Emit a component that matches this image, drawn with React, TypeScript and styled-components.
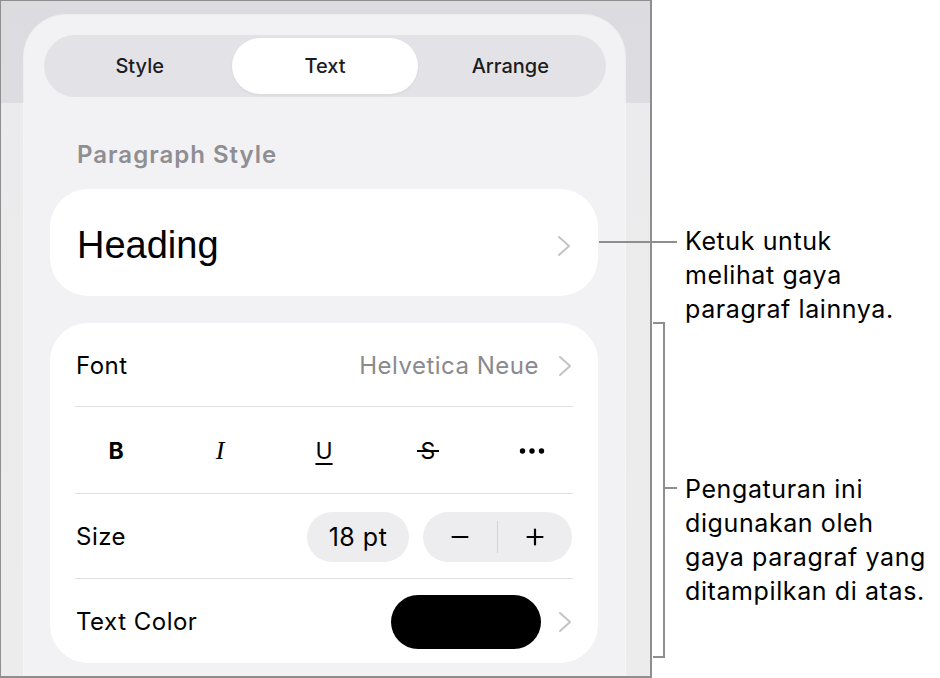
import React from "react";
import styled, { createGlobalStyle } from "styled-components";

const Global = createGlobalStyle`
  html, body { margin: 0; padding: 0; background: #ffffff; }
  body {
    width: 940px;
    height: 678px;
    overflow: hidden;
    font-family: Inter, "Noto Sans", "Liberation Sans", sans-serif;
    -webkit-font-smoothing: antialiased;
  }
  * { box-sizing: border-box; }
`;

const Page = styled.div`
  position: relative;
  display: flex;
  width: 940px;
  height: 678px;
`;

const Frame = styled.div`
  flex: 0 0 652px;
  height: 678px;
  border-style: solid;
  border-color: #8e8e8e;
  border-width: 1px 2px 2px 1px;
  background: linear-gradient(to bottom, #dcdce0 0, #dddde1 102px, #ebebed 102px, #ececec 100%);
  padding: 14px 25px 0 23px;
  overflow: hidden;
`;

const Sheet = styled.div`
  height: 100%;
  border-radius: 42px 42px 0 0;
  background: #f2f2f4;
  padding: 20px 19px 0 20px;
  box-shadow: 0 0 0 1px rgba(255, 255, 255, 0.5);
`;

const Segmented = styled.div`
  display: grid;
  grid-template-columns: repeat(3, 1fr);
  height: 62px;
  padding: 3px;
  border-radius: 31px;
  background: #e3e3e7;
`;

const Tab = styled.div<{ $active?: boolean }>`
  display: flex;
  align-items: center;
  justify-content: center;
  border-radius: 28px;
  font-size: 20px;
  font-weight: 500;
  color: #1c1c1e;
  background: ${(p) => (p.$active ? "#ffffff" : "transparent")};
  box-shadow: ${(p) => (p.$active ? "0 1px 3px rgba(0,0,0,0.06)" : "none")};
`;

const Body = styled.div`
  padding: 0 8px 0 6px;
`;

const SectionLabel = styled.div`
  margin: 46px 0 0 27px;
  font-size: 24px;
  line-height: 24px;
  font-weight: 600;
  letter-spacing: 1px;
  color: #8e8e93;
`;

const HeadingCard = styled.div`
  display: flex;
  align-items: center;
  justify-content: space-between;
  margin-top: 22px;
  height: 107px;
  padding: 6px 27px 0 27px;
  border-radius: 38px;
  background: #ffffff;
`;

const HeadingText = styled.span`
  font-family: "Liberation Sans", Arial, sans-serif;
  font-size: 38px;
  color: #000000;
`;

const Card = styled.div`
  margin-top: 27px;
  border-radius: 38px;
  background: #ffffff;
  overflow: hidden;
`;

const Row = styled.div<{ $h: number; $divided?: boolean }>`
  position: relative;
  display: flex;
  align-items: center;
  justify-content: space-between;
  height: ${(p) => p.$h}px;
  padding: 2px 26px 0 26px;
  &::before {
    content: "";
    display: ${(p) => (p.$divided ? "block" : "none")};
    position: absolute;
    top: 0;
    left: 25px;
    right: 25px;
    height: 1px;
    background: #e2e2e4;
  }
`;

const IconRow = styled(Row)`
  display: grid;
  grid-template-columns: repeat(5, 1fr);
  padding: 2px 14px 0 14px;
`;

const IconCell = styled.div`
  display: flex;
  align-items: center;
  justify-content: center;
  height: 40px;
  color: #000000;
`;

const BoldGlyph = styled.span`
  font-size: 23px;
  font-weight: 700;
`;

const ItalicGlyph = styled.span`
  font-family: "Liberation Serif", "Times New Roman", serif;
  font-style: italic;
  font-size: 26px;
`;

const UnderGlyph = styled.span`
  font-size: 23px;
  text-decoration: underline;
  text-decoration-thickness: 2px;
  text-underline-offset: 4px;
`;

const StrikeGlyph = styled.span`
  position: relative;
  font-size: 23px;
  &::after {
    content: "";
    position: absolute;
    left: -4px;
    right: -4px;
    top: 50%;
    height: 2px;
    margin-top: -1px;
    background: #000000;
  }
`;

const Label = styled.span`
  font-size: 24px;
  letter-spacing: 0.5px;
  color: #000000;
`;

const Value = styled.span`
  font-size: 24px;
  letter-spacing: 0.5px;
  color: #8a8a8e;
`;

const Trail = styled.div<{ $gap: number }>`
  display: flex;
  align-items: center;
  gap: ${(p) => p.$gap}px;
`;

const Pill = styled.div`
  display: flex;
  align-items: center;
  justify-content: center;
  width: 102px;
  height: 50px;
  border-radius: 25px;
  background: #ededef;
  font-size: 25px;
  letter-spacing: 0.5px;
  color: #000000;
`;

const Stepper = styled.div`
  display: grid;
  grid-template-columns: 1fr 1px 1fr;
  align-items: center;
  width: 149px;
  height: 50px;
  border-radius: 25px;
  background: #ededef;
`;

const StepBtn = styled.div`
  display: flex;
  align-items: center;
  justify-content: center;
  height: 100%;
`;

const StepDivider = styled.div`
  height: 32px;
  background: #d4d4d6;
`;

const Swatch = styled.div`
  width: 150px;
  height: 54px;
  border-radius: 27px;
  background: #000000;
`;

const Notes = styled.div`
  flex: 1;
  padding-left: 33px;
  font-size: 25px;
  letter-spacing: 0.6px;
  line-height: 34px;
  color: #000000;
  white-space: nowrap;
`;

const Note = styled.p<{ $top: number }>`
  margin: ${(p) => p.$top}px 0 0 0;
`;

const Leader = styled.div`
  position: absolute;
  left: 599px;
  top: 241px;
  width: 78px;
  height: 2px;
  background: #8e8e8e;
`;

const Bracket = styled.div`
  position: absolute;
  left: 653px;
  top: 322px;
  width: 12px;
  height: 336px;
  border: 2px solid #8e8e8e;
  border-left: none;
`;

const BracketTick = styled.div`
  position: absolute;
  left: 665px;
  top: 487px;
  width: 12px;
  height: 2px;
  background: #8e8e8e;
`;

const Chevron = () => (
  <svg width="14" height="22" viewBox="0 0 14 22" fill="none">
    <polyline points="2,2 12,11 2,20" stroke="#c4c4c7" strokeWidth="2" strokeLinecap="round" strokeLinejoin="round" />
  </svg>
);

const Dots = () => (
  <svg width="26" height="8" viewBox="0 0 26 8">
    <circle cx="3.5" cy="4" r="2.7" fill="#000" />
    <circle cx="13" cy="4" r="2.7" fill="#000" />
    <circle cx="22.5" cy="4" r="2.7" fill="#000" />
  </svg>
);

const Minus = () => (
  <svg width="18" height="18" viewBox="0 0 18 18">
    <line x1="1.5" y1="9" x2="16.5" y2="9" stroke="#000" strokeWidth="2.2" strokeLinecap="round" />
  </svg>
);

const Plus = () => (
  <svg width="18" height="18" viewBox="0 0 18 18">
    <line x1="1.5" y1="9" x2="16.5" y2="9" stroke="#000" strokeWidth="2.2" strokeLinecap="round" />
    <line x1="9" y1="1.5" x2="9" y2="16.5" stroke="#000" strokeWidth="2.2" strokeLinecap="round" />
  </svg>
);

export default function App() {
  return (
    <>
      <Global />
      <Page>
        <Frame>
          <Sheet>
            <Segmented>
              <Tab>Style</Tab>
              <Tab $active>Text</Tab>
              <Tab>Arrange</Tab>
            </Segmented>
            <Body>
              <SectionLabel>Paragraph Style</SectionLabel>
              <HeadingCard>
                <HeadingText>Heading</HeadingText>
                <Chevron />
              </HeadingCard>
              <Card>
                <Row $h={83}>
                  <Label>Font</Label>
                  <Trail $gap={19}>
                    <Value>Helvetica Neue</Value>
                    <Chevron />
                  </Trail>
                </Row>
                <IconRow $h={87} $divided>
                  <IconCell><BoldGlyph>B</BoldGlyph></IconCell>
                  <IconCell><ItalicGlyph>I</ItalicGlyph></IconCell>
                  <IconCell><UnderGlyph>U</UnderGlyph></IconCell>
                  <IconCell><StrikeGlyph>S</StrikeGlyph></IconCell>
                  <IconCell><Dots /></IconCell>
                </IconRow>
                <Row $h={85} $divided>
                  <Label>Size</Label>
                  <Trail $gap={14}>
                    <Pill>18 pt</Pill>
                    <Stepper>
                      <StepBtn><Minus /></StepBtn>
                      <StepDivider />
                      <StepBtn><Plus /></StepBtn>
                    </Stepper>
                  </Trail>
                </Row>
                <Row $h={85} $divided>
                  <Label>Text Color</Label>
                  <Trail $gap={17}>
                    <Swatch />
                    <Chevron />
                  </Trail>
                </Row>
              </Card>
            </Body>
          </Sheet>
        </Frame>
        <Notes>
          <Note $top={224}>
            Ketuk untuk
            <br />
            melihat gaya
            <br />
            paragraf lainnya.
          </Note>
          <Note $top={146}>
            Pengaturan ini
            <br />
            digunakan oleh
            <br />
            gaya paragraf yang
            <br />
            ditampilkan di atas.
          </Note>
        </Notes>
        <Leader />
        <Bracket />
        <BracketTick />
      </Page>
    </>
  );
}
